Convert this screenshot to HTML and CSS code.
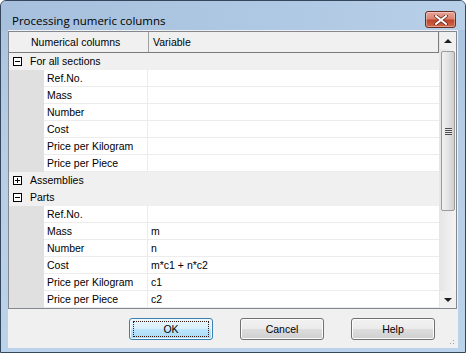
FILE: index.html
```html
<!DOCTYPE html>
<html lang="en">
<head>
  <meta charset="UTF-8">
  <title>Processing numeric columns</title>
  <link rel="stylesheet" href="styles.css">
</head>
<body>
<div class="window">
  <!-- Title bar -->
  <div class="titlebar">
    <span class="title">Processing numeric columns</span>
    <button class="close-btn">
      <svg width="14" height="10" viewBox="0 0 14 10">
        <path d="M2 1 L12 9 M12 1 L2 9" stroke="#5a1a12" stroke-width="3.4" stroke-linecap="square"/>
        <path d="M2 1 L12 9 M12 1 L2 9" stroke="#ffffff" stroke-width="2" stroke-linecap="square"/>
      </svg>
    </button>
  </div>

  <div class="client">
    <!-- Grid -->
    <div class="grid">
      <div class="grid-body">
        <div class="header">
          <div class="hcell hcell-name">Numerical columns</div>
          <div class="hcell hcell-var">Variable</div>
        </div>

        <div class="group">
          <svg class="toggle" width="9" height="9" viewBox="0 0 9 9"><rect x="0.5" y="0.5" width="8" height="8" fill="#fff" stroke="#000"/><path d="M2 4.5 H7" stroke="#000"/></svg>
          For all sections
        </div>
        <div class="row"><div class="indent"></div><div class="name">Ref.No.</div><div class="value"></div></div>
        <div class="row"><div class="indent"></div><div class="name">Mass</div><div class="value"></div></div>
        <div class="row"><div class="indent"></div><div class="name">Number</div><div class="value"></div></div>
        <div class="row"><div class="indent"></div><div class="name">Cost</div><div class="value"></div></div>
        <div class="row"><div class="indent"></div><div class="name">Price per Kilogram</div><div class="value"></div></div>
        <div class="row"><div class="indent"></div><div class="name">Price per Piece</div><div class="value"></div></div>

        <div class="group">
          <svg class="toggle" width="9" height="9" viewBox="0 0 9 9"><rect x="0.5" y="0.5" width="8" height="8" fill="#fff" stroke="#000"/><path d="M2 4.5 H7 M4.5 2 V7" stroke="#000"/></svg>
          Assemblies
        </div>

        <div class="group">
          <svg class="toggle" width="9" height="9" viewBox="0 0 9 9"><rect x="0.5" y="0.5" width="8" height="8" fill="#fff" stroke="#000"/><path d="M2 4.5 H7" stroke="#000"/></svg>
          Parts
        </div>
        <div class="row"><div class="indent"></div><div class="name">Ref.No.</div><div class="value"></div></div>
        <div class="row"><div class="indent"></div><div class="name">Mass</div><div class="value">m</div></div>
        <div class="row"><div class="indent"></div><div class="name">Number</div><div class="value">n</div></div>
        <div class="row"><div class="indent"></div><div class="name">Cost</div><div class="value">m*c1 + n*c2</div></div>
        <div class="row"><div class="indent"></div><div class="name">Price per Kilogram</div><div class="value">c1</div></div>
        <div class="row"><div class="indent"></div><div class="name">Price per Piece</div><div class="value">c2</div></div>
      </div>

      <!-- Vertical scrollbar -->
      <div class="scrollbar">
        <div class="arrow"><span class="tri tri-up"></span></div>
        <div class="track">
          <div class="thumb"><span class="grip"></span></div>
        </div>
        <div class="arrow"><span class="tri tri-down"></span></div>
      </div>
    </div>

    <!-- Buttons -->
    <div class="buttons">
      <button class="btn btn-default"><span class="focus">OK</span></button>
      <button class="btn">Cancel</button>
      <button class="btn">Help</button>
    </div>
    <div class="size-grip"></div>
  </div>
</div>
</body>
</html>
```

FILE: styles.css
```css
html, body {
  margin: 0;
  padding: 0;
  background: #ffffff;
}

.window {
  position: relative;
  width: 464px;
  height: 351px;
  border: 1px solid #34475c;
  border-radius: 6px 6px 0 0;
  background: linear-gradient(180deg, #a9c2de 0%, #b7cde6 40%, #bad2ea 100%);
  overflow: hidden;
  font-family: "Liberation Sans", Arial, sans-serif;
  font-size: 10.5px;
  color: #000;
}

/* Title bar */
.titlebar {
  height: 29px;
  display: flex;
  align-items: center;
  justify-content: space-between;
  padding: 0 9px 0 11px;
  background: linear-gradient(90deg, #a6c0dd 0%, #afc8e3 60%, #b8cfe8 100%);
}

.title {
  font-family: "Open Sans", "DejaVu Sans", sans-serif;
  font-size: 11.5px;
  padding-top: 9px;
  color: #000;
}

.close-btn {
  width: 31px;
  height: 17px;
  margin-top: 8px;
  padding: 0;
  border: 1px solid #6b2c22;
  border-radius: 3px;
  background: linear-gradient(180deg, #e7a597 0%, #d98370 45%, #c0442a 55%, #d06a4c 100%);
  box-shadow: inset 0 0 0 1px rgba(255, 255, 255, 0.35);
  display: flex;
  align-items: center;
  justify-content: center;
}

/* Client area */
.client {
  position: relative;
  margin: 0 7px;
  height: 318px;
  background: #f0f0f0;
}

.grid {
  position: relative;
  top: 1px;
  width: 447px;
  height: 276px;
  border: 1px solid #828790;
  background: #ffffff;
  display: flex;
}

.grid-body {
  width: 430px;
}

.header {
  display: flex;
  height: 20px;
  border-bottom: 1px solid #7a7a7a;
  background: #f0f0f0;
}

.hcell {
  line-height: 20px;
  white-space: nowrap;
}

.hcell-name {
  width: 117px;
  padding-left: 22px;
  border-right: 1px solid #a0a0a0;
}

.hcell-var {
  flex: 1;
  padding-left: 4px;
  border-right: 1px solid #7a7a7a;
}

.group {
  height: 17px;
  line-height: 17px;
  background: #f0f0f0;
  display: flex;
  align-items: center;
  white-space: nowrap;
}

.toggle {
  display: block;
  margin: 0 8px 0 4px;
}

.row {
  display: grid;
  grid-template-columns: 35px 104px 291px;
  height: 17px;
  line-height: 16px;
}

.indent {
  background: #e0e0e0;
}

.name, .value {
  border-bottom: 1px solid #ececec;
  padding-left: 3px;
  white-space: nowrap;
}

.name {
  border-right: 1px solid #ececec;
}

/* Scrollbar */
.scrollbar {
  width: 17px;
  display: flex;
  flex-direction: column;
  background: #f0f0f0;
  border-left: 1px solid #e6e6e6;
  box-sizing: border-box;
}

.arrow {
  height: 17px;
  display: flex;
  align-items: center;
  justify-content: center;
}

.tri {
  width: 0;
  height: 0;
  border-left: 4px solid transparent;
  border-right: 4px solid transparent;
}

.tri-up {
  border-bottom: 4px solid #1e1e1e;
}

.tri-down {
  border-top: 4px solid #1e1e1e;
}

.track {
  flex: 1;
  background: linear-gradient(90deg, #e6e6e6, #f4f4f4);
}

.thumb {
  box-sizing: border-box;
  margin: 2px 1px 0 1px;
  height: 160px;
  border: 1px solid #9a9a9a;
  border-radius: 2px;
  background: linear-gradient(90deg, #f2f2f2 0%, #e4e4e4 50%, #cfcfcf 100%);
  display: flex;
  align-items: center;
  justify-content: center;
}

.grip {
  width: 7px;
  height: 7px;
  background: repeating-linear-gradient(180deg, #4d4d4d 0 1px, #e8e8e8 1px 2px);
}

/* Buttons */
.buttons {
  display: flex;
  gap: 27px;
  padding: 10px 0 0 121px;
}

.btn {
  width: 84px;
  height: 22px;
  padding: 0;
  border: 1px solid #707070;
  border-radius: 3px;
  background: linear-gradient(180deg, #f2f2f2 0%, #ebebeb 49%, #dddddd 51%, #cfcfcf 100%);
  box-shadow: inset 0 0 0 1px #fcfcfc;
  font-family: "Liberation Sans", Arial, sans-serif;
  font-size: 10.5px;
  color: #000;
}

.btn-default {
  border-color: #3c7fb1;
  background: linear-gradient(180deg, #eaf6fd 0%, #d9f0fc 49%, #bee6fd 51%, #a7d9f5 100%);
  box-shadow: inset 0 0 0 1px #f0fafe;
  display: flex;
  align-items: center;
  justify-content: center;
}

.focus {
  box-sizing: border-box;
  width: 76px;
  height: 16px;
  line-height: 14px;
  border: 1px dotted #3a1a10;
}

.size-grip {
  position: absolute;
  right: 2px;
  bottom: 2px;
  width: 10px;
  height: 10px;
  background-image: radial-gradient(circle, #a0a0a0 0.8px, transparent 1px);
  background-size: 3px 3px;
  clip-path: polygon(100% 0, 100% 100%, 0 100%);
}
```
